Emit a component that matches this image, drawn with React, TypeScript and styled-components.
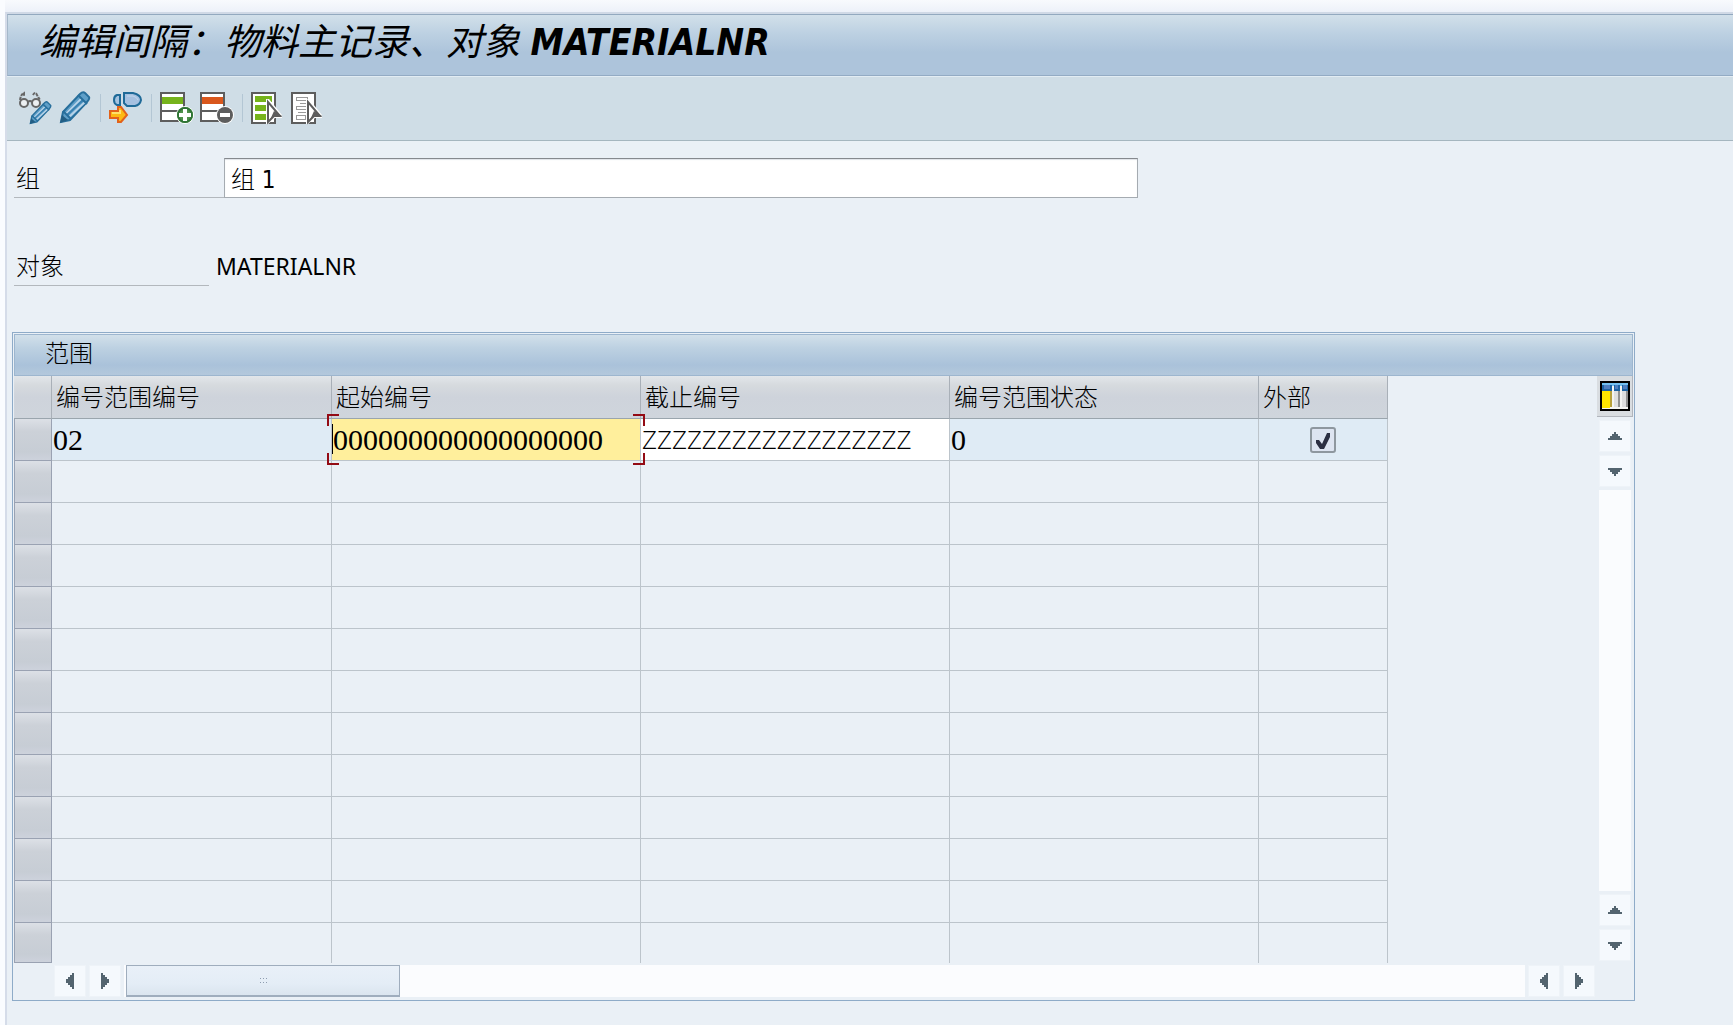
import React, { useState } from "react";
import styled, { createGlobalStyle, css } from "styled-components";

const cjk = `"Noto Sans CJK SC", sans-serif`;

const GlobalStyle = createGlobalStyle`
  * { box-sizing: border-box; }
  html, body, #root { min-height: 100%; }
  body {
    margin: 0;
    background: #eaf0f6;
    color: #000;
    font: 300 24px/32px "Noto Sans", ${cjk};
  }
  button, input { font: inherit; color: inherit; }
`;

const Frame = styled.div`
  min-height: 100vh;
  display: flex;
  flex-direction: column;
  border-left: 5px solid #fafcff;
  background: linear-gradient(#f8fafd, #edf1f9 12px, #eaf0f6 12px);
  padding-top: 12px;
`;

const Window = styled.main`
  flex: 1;
  border-top: 2px solid #d0d9e6;
  border-left: 2px solid #d5dce9;
`;

const TitleBar = styled.header`
  height: 62px;
  padding: 0 31px;
  border-top: 1px solid #93a9bf;
  border-bottom: 1px solid #93abc4;
  border-left: 1px solid #a5b8ca;
  background: linear-gradient(#d2e0ea, #bdd1e2 30%, #adc4db 62%, #adc4db);
`;

const Title = styled.h1`
  margin: 0;
  font: italic 400 37px/56px "DejaVu Sans Condensed", "DejaVu Sans", ${cjk};
  white-space: nowrap;

  strong { font-weight: 700; }
`;

const Toolbar = styled.div`
  height: 65px;
  display: flex;
  align-items: center;
  gap: 6px;
  padding: 0 11px 2px;
  border-top: 1px solid #e2ecf3;
  border-bottom: 1px solid #a5b6bf;
  background: #cfdde6;
`;

const ToolButton = styled.button`
  width: 34px;
  height: 34px;
  padding: 0;
  border: 0;
  background: none;

  svg { display: block; }
`;

const Divider = styled.span`
  width: 1px;
  height: 28px;
  margin: 0 2px;
  background: #b3c6d4;
`;

const Form = styled.div`
  padding: 17px 7px 0;
`;

const Field = styled.div`
  display: flex;
  height: 40px;
  margin-bottom: 48px;
`;

const caption = css<{ $width: number }>`
  width: ${(p) => p.$width}px;
  height: 40px;
  padding: 3px 2px;
  border-bottom: 1px solid #b3b8bd;
  font: 300 24px/32px ${cjk};
`;

const Label = styled.label`${caption}`;
const Caption = styled.span`${caption}`;

const TextInput = styled.input`
  flex: 1;
  min-width: 0;
  max-width: 914px;
  height: 40px;
  padding: 0 6px 2px;
  border: 1px solid #a5abb1;
  border-top-color: #85898e;
  background: #fff;
  font: 300 24px/32px "DejaVu Sans Condensed", "DejaVu Sans", ${cjk};
  box-shadow: inset 0 1px 1px #dfe3e8;
  outline: 0;
`;

const Value = styled.output`
  padding: 4px 7px;
  font: 400 23px/32px "Noto Sans", sans-serif;
`;

const Panel = styled.section`
  margin: -2px 98px 24px 5px;
  padding: 1px 1px 3px;
  border: 1px solid #8eabc8;
`;

const PanelTitle = styled.h2`
  height: 42px;
  margin: 0;
  padding: 0 30px;
  border: 1px solid #9db6cf;
  background: linear-gradient(#d2e0ea, #bdd1e2 32%, #aac2da 75%, #b3c8dc);
  font: 300 24px/34px ${cjk};
`;

const Body = styled.div`
  display: flex;
  justify-content: space-between;
`;

const Grid = styled.table`
  width: 1374px;
  table-layout: fixed;
  border-collapse: separate;
  border-spacing: 0;
`;

const HeadCell = styled.th`
  height: 43px;
  padding: 0 4px 3px;
  border-right: 1px solid #a9b0b8;
  border-bottom: 1px solid #9aa5ad;
  background: linear-gradient(#e2e6ea, #d6dade 22%, #ced3db 50%, #cfd5dc);
  font: 300 24px/32px ${cjk};
  text-align: left;
  white-space: nowrap;
`;

const Row = styled.tr`
  height: 42px;
  &:last-child { height: 40px; }
`;

const Cell = styled.td<{ $tone?: string; $center?: boolean }>`
  position: relative;
  padding: 0 1px;
  border-right: 1px solid #bcc4cb;
  border-bottom: 1px solid #bcc4cb;
  background: ${(p) => p.$tone ?? "transparent"};
  font: 400 30px/34px "Liberation Serif", serif;
  text-align: ${(p) => (p.$center ? "center" : "left")};

  ${Row}:last-child & { border-bottom: 0; }
`;

const RowHeader = styled.th`
  height: inherit;
  padding: 0;
  border: 1px solid #9aa2b2;
  border-top: 0;
  background: linear-gradient(#dce0e6, #ccd1d8 30%, #c7cdd5 80%, #cdd2dc);
`;

const RowSelect = styled.button`
  display: block;
  width: 100%;
  height: 38px;
  padding: 0;
  border: 0;
  background: none;
`;

const CellInput = styled.input<{ $letters?: boolean }>`
  display: block;
  width: 100%;
  height: 40px;
  padding: 0;
  border: 0;
  outline: 0;
  background: none;
  ${(p) => p.$letters && css`
    padding-bottom: 2px;
    font: 300 26px/34px "Open Sans", sans-serif;
  `}
`;

const Corner = styled.i<{ $v: "top" | "bottom"; $h: "left" | "right" }>`
  position: absolute;
  z-index: 1;
  width: 12px;
  height: 12px;
  ${(p) => p.$v}: -5px;
  ${(p) => p.$h}: -5px;
  border: 0 solid #930b14;
  border-${(p) => p.$v}-width: 2px;
  border-${(p) => p.$h}-width: 2px;
`;

const Caret = styled.i`
  position: absolute;
  left: 0;
  top: 5px;
  width: 1px;
  height: 30px;
  background: #000;
`;

const Tick = styled.input`
  appearance: none;
  display: block;
  width: 26px;
  height: 26px;
  margin: 0 auto;
  border: 2px solid #8e979f;
  border-radius: 3px;
  background: #dde4f1;

  &:checked {
    background: #dde4f1
      url("data:image/svg+xml,%3Csvg xmlns='http://www.w3.org/2000/svg' viewBox='0 0 22 22'%3E%3Cpath d='M4 11h3l3 4 5-11h3v4l-6 12H8L4 14z' fill='%232b2e42'/%3E%3C/svg%3E")
      center / 22px 22px no-repeat;
  }
`;

const VerticalBar = styled.div`
  width: 36px;
  display: flex;
  flex-direction: column;
  align-items: center;
  gap: 3px;
  padding-bottom: 2px;
`;

const ConfigButton = styled.button`
  width: 36px;
  height: 41px;
  padding: 4px 3px;
  border: 1px solid #b1b5bc;
  border-width: 0 1px 1px 0;
  background: #d9dde1;

  svg { display: block; }
`;

const ScrollButton = styled.button`
  flex: none;
  width: 32px;
  height: 32px;
  padding: 0;
  border: 1px solid #eef3f8;
  background: #f5f9fd;

  svg { display: block; margin: auto; }
`;

const VerticalTrack = styled.div`
  flex: 1;
  width: 32px;
  background: #fafcfe;
`;

const HorizontalBar = styled.div`
  display: flex;
  gap: 3px;
  margin-top: 2px;
  padding: 0 38px 0 40px;
`;

const HorizontalTrack = styled.div`
  flex: 1;
  height: 32px;
  padding-left: 2px;
  background: #fbfcfe;
`;

const Thumb = styled.button`
  display: grid;
  place-items: center;
  width: 274px;
  height: 32px;
  padding: 0;
  border: 1px solid #9fadbd;
  border-bottom-width: 2px;
  background: linear-gradient(#e9f0f8, #e4edf6 60%, #dbe5ef);
`;

const arrows = {
  up: "M7 1h2v2h2v2h2v2h2v2H1V7h2V5h2V3h2z",
  down: "M1 2h14v2h-2v2h-2v2H9v2H7V8H5V6H3V4H1z",
  left: "M9 1v16H7v-2H5v-2H3v-2H1V7h2V5h2V3h2V1z",
  right: "M1 1v16h2v-2h2v-2h2v-2h2V7H7V5H5V3H3V1z",
};

function Scroll({ to, label }: { to: keyof typeof arrows; label: string }) {
  const flat = to === "up" || to === "down";
  return (
    <ScrollButton type="button" aria-label={label}>
      <svg width={flat ? 16 : 10} height={flat ? 11 : 18} shapeRendering="crispEdges">
        <path d={arrows[to]} fill="#53646f" />
      </svg>
    </ScrollButton>
  );
}

function Pencil({ small }: { small?: boolean }) {
  return (
    <g transform={small ? "translate(11 10) scale(.72)" : undefined}>
      <path d="M2 31l2-10L21 3q3-3 5-1l4 4q1 2-2 5L11 29z" fill="#5f9fc8" stroke="#286f9c" strokeWidth="2" />
      <path d="M7 23L22 8M10 26L26 11" stroke="#b8d3e8" strokeWidth="2" />
      <path d="M8 24L24 9" stroke="#3981b1" strokeWidth="2" />
      <path d="M19 4l9 9M4 20l8 8" stroke="#286f9c" strokeWidth="2" />
      <path d="M1 32l2-8 6 5z" fill="#235e84" />
    </g>
  );
}

function DisplayChangeIcon() {
  return (
    <svg width="34" height="34" fill="none">
      <g stroke="#666" strokeWidth="2">
        <path d="M2 9q1-6 4-7v3M15 4q2-4 4 0l3 5" strokeDasharray="3 1" />
        <circle cx="6" cy="12" r="4" fill="#eceff1" />
        <circle cx="18" cy="12" r="4" fill="#eceff1" />
        <path d="M10 11q2-2 4 0" />
      </g>
      <Pencil small />
    </svg>
  );
}

function PencilIcon() {
  return (
    <svg width="34" height="34" fill="none">
      <g transform="translate(1 0)"><Pencil /></g>
    </svg>
  );
}

function OtherObjectIcon() {
  return (
    <svg width="34" height="34" fill="none">
      <path d="M11 4H8Q5 5 5 9t3 5h3z" fill="#a5c3e0" stroke="#1f6a98" strokeWidth="2" />
      <path d="M15 2h9q8 2 8 7-1 5-6 6H18l-3-3z" fill="#a5c0e0" stroke="#1f6a98" strokeWidth="2" />
      <path d="M18 5h6q4 1 5 4" stroke="#c3d7ec" strokeWidth="1" />
      <path d="M1 20h8v-4h3l6 8-6 7H9v-4H1z" fill="#fdb913" stroke="#e2621b" strokeWidth="2" />
      <path d="M3 22h8v-3" stroke="#ffe16a" strokeWidth="2" />
    </svg>
  );
}

function RowIcon({ insert }: { insert?: boolean }) {
  return (
    <svg width="34" height="34" fill="none">
      <g shapeRendering="crispEdges">
        <path d="M1 2h23v28H1z" fill="#fff" stroke="#5d5d5d" strokeWidth="2" />
        <path d="M2 6h21v7H2z" fill={insert ? "#76b31b" : "#d9571c"} />
        <path d="M2 20h20" stroke="#5d5d5d" strokeWidth="2" />
      </g>
      <circle cx="25" cy="24" r="9" fill="#fff" />
      <circle cx="25" cy="24" r="8" fill={insert ? "#4f914a" : "#5d5d5d"} />
      {insert && <circle cx="25" cy="24" r="7" stroke="#2f7435" strokeWidth="2" />}
      <path d={insert ? "M25 18v12M19 24h12" : "M20 24h10"} stroke="#fff" strokeWidth="4" />
    </svg>
  );
}

function SelectIcon({ filled }: { filled?: boolean }) {
  return (
    <svg width="34" height="34" fill="none">
      <g shapeRendering="crispEdges">
        <path d="M1 2h23v30H1z" fill="#fff" stroke="#5d5d5d" strokeWidth="2" />
        {filled ? (
          <path d="M4 5h17v6H4zM4 14h11v6H4zM4 23h11v6H4z" fill="#76b31b" />
        ) : (
          <path d="M5 6h11v3H5zM9 12h9M5 15h10v3H5zM7 21h9M5 24h9v4H5z" stroke="#9a9a9a" strokeWidth="1" />
        )}
      </g>
      <path d="M15 8h3l13 16v3h-7l-7 6h-2z" fill="#fff" />
      <path d="M17 11v20l6-6h6z" fill="#fff" stroke="#5d5d5d" strokeWidth="2" />
      <path d="M23 20l8 5h-8l-4 4z" fill="#5d5d5d" />
    </svg>
  );
}

function ConfigIcon() {
  return (
    <svg width="30" height="30" shapeRendering="crispEdges">
      <path d="M0 0h30v30H0z" />
      <path d="M2 2h26v26H2z" fill="#f4f4f2" />
      <path d="M2 2h26v3H2z" fill="#72bff0" />
      <path d="M2 4h10v6H2zM14 4h6v6h-6zM22 4h6v6h-6z" fill="#1c62a2" />
      <path d="M4 4h6v4H4zM15 4h3v4h-3zM23 4h4v4h-4z" fill="#4f7fc0" />
      <path d="M2 10h8v17H2z" fill="#ffe500" />
      <path d="M10 10h2v16h-2z" fill="#b8a13a" />
      <path d="M14 10h4v16h-4zM22 10h4v16h-4z" fill="#dedede" />
      <path d="M18 10h2v16h-2zM26 10h2v16h-2z" fill="#909090" />
    </svg>
  );
}

const columns = [
  { title: "编号范围编号", width: 280 },
  { title: "起始编号", width: 309 },
  { title: "截止编号", width: 309 },
  { title: "编号范围状态", width: 309 },
  { title: "外部", width: 129 },
];

const emptyRows = Array.from({ length: 12 }, (_, i) => i + 2);

const active = "#dfebf5";

export default function App() {
  const [group, setGroup] = useState("组 1");
  const [from, setFrom] = useState("0".repeat(18));
  const [to, setTo] = useState("Z".repeat(18));
  const [external, setExternal] = useState(true);

  return (
    <>
      <GlobalStyle />
      <Frame>
        <Window>
          <TitleBar>
            <Title>编辑间隔：物料主记录、对象 <strong>MATERIALNR</strong></Title>
          </TitleBar>

          <Toolbar role="toolbar">
            <ToolButton type="button" aria-label="显示/更改"><DisplayChangeIcon /></ToolButton>
            <ToolButton type="button" aria-label="更改"><PencilIcon /></ToolButton>
            <Divider />
            <ToolButton type="button" aria-label="其他对象"><OtherObjectIcon /></ToolButton>
            <Divider />
            <ToolButton type="button" aria-label="插入行"><RowIcon insert /></ToolButton>
            <ToolButton type="button" aria-label="删除行"><RowIcon /></ToolButton>
            <Divider />
            <ToolButton type="button" aria-label="全选"><SelectIcon filled /></ToolButton>
            <ToolButton type="button" aria-label="取消全选"><SelectIcon /></ToolButton>
          </Toolbar>

          <Form>
            <Field>
              <Label htmlFor="group" $width={210}>组</Label>
              <TextInput id="group" value={group} onChange={(e) => setGroup(e.target.value)} />
            </Field>
            <Field>
              <Caption id="object" $width={195}>对象</Caption>
              <Value aria-labelledby="object">MATERIALNR</Value>
            </Field>
          </Form>

          <Panel>
            <PanelTitle>范围</PanelTitle>
            <Body>
              <Grid>
                <colgroup>
                  <col width={38} />
                  {columns.map((c) => <col key={c.title} width={c.width} />)}
                </colgroup>
                <thead>
                  <tr>
                    <HeadCell />
                    {columns.map((c) => <HeadCell key={c.title} scope="col">{c.title}</HeadCell>)}
                  </tr>
                </thead>
                <tbody>
                  <Row>
                    <RowHeader scope="row"><RowSelect type="button" aria-label="选择行 1" /></RowHeader>
                    <Cell $tone={active}>02</Cell>
                    <Cell $tone="#ffef9c">
                      <CellInput aria-label="起始编号" value={from} onChange={(e) => setFrom(e.target.value)} />
                      <Caret />
                      <Corner $v="top" $h="left" />
                      <Corner $v="top" $h="right" />
                      <Corner $v="bottom" $h="left" />
                      <Corner $v="bottom" $h="right" />
                    </Cell>
                    <Cell $tone="#fff">
                      <CellInput $letters aria-label="截止编号" value={to} onChange={(e) => setTo(e.target.value)} />
                    </Cell>
                    <Cell $tone={active}>0</Cell>
                    <Cell $tone={active} $center>
                      <Tick
                        type="checkbox"
                        aria-label="外部"
                        checked={external}
                        onChange={(e) => setExternal(e.target.checked)}
                      />
                    </Cell>
                  </Row>
                  {emptyRows.map((n) => (
                    <Row key={n}>
                      <RowHeader scope="row"><RowSelect type="button" aria-label={`选择行 ${n}`} /></RowHeader>
                      {columns.map((c) => <Cell key={c.title} />)}
                    </Row>
                  ))}
                </tbody>
              </Grid>

              <VerticalBar>
                <ConfigButton type="button" aria-label="配置"><ConfigIcon /></ConfigButton>
                <Scroll to="up" label="向上" />
                <Scroll to="down" label="向下" />
                <VerticalTrack />
                <Scroll to="up" label="上一页" />
                <Scroll to="down" label="下一页" />
              </VerticalBar>
            </Body>

            <HorizontalBar>
              <Scroll to="left" label="向左" />
              <Scroll to="right" label="向右" />
              <HorizontalTrack>
                <Thumb type="button" aria-label="水平滚动">
                  <svg width="9" height="7" shapeRendering="crispEdges">
                    <path d="M1 1h1v1H1zM4 1h1v1H4zM7 1h1v1H7zM1 5h1v1H1zM4 5h1v1H4zM7 5h1v1H7z" fill="#8e9db0" />
                  </svg>
                </Thumb>
              </HorizontalTrack>
              <Scroll to="left" label="上一列" />
              <Scroll to="right" label="下一列" />
            </HorizontalBar>
          </Panel>
        </Window>
      </Frame>
    </>
  );
}
